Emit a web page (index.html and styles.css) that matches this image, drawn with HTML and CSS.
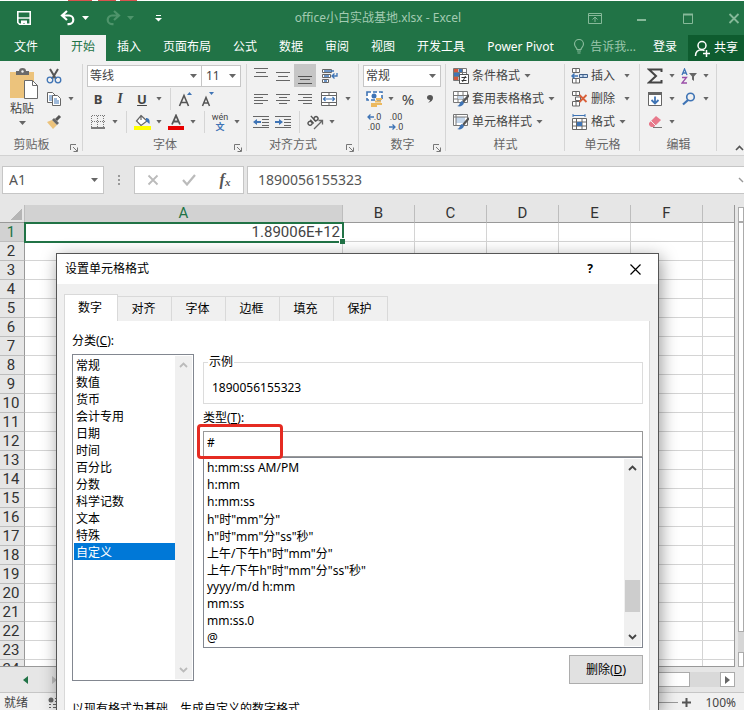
FILE: index.html
```html
<!DOCTYPE html>
<html lang="zh-CN">
<head>
  <meta charset="UTF-8">
  <meta name="viewport" content="width=device-width, initial-scale=1.0">
  <title>office小白实战基地.xlsx - Excel</title>
  <link rel="stylesheet" href="styles.css">
</head>
<body>
  <div class="top-strip"></div>

  <header class="titlebar">
    <div class="quick">
      <button class="quick-btn" aria-label="保存"><svg width="16" height="16"><path d="M1.8 1.8h12.4v12.4H3.5L1.8 12.5z" fill="none" stroke="#fff" stroke-width="1.6"/><path d="M2 8h12" stroke="#fff" stroke-width="1.4"/><path d="M5 10.5h6V15H9v-2H7v2H5z" fill="#fff"/></svg></button>
      <button class="quick-btn undo" aria-label="撤消"><svg width="16" height="16"><path d="M7 1L2 5.5L7 10M2.5 5.5H9a4.3 4.3 0 0 1 0 8.6H7.5" fill="none" stroke="#fff" stroke-width="2.2"/></svg></button>
      <i class="arrow light"></i>
      <button class="quick-btn redo" aria-label="恢复"><svg width="16" height="16"><path d="M9 1l5 4.5L9 10M13.5 5.5H7a4.3 4.3 0 0 0 0 8.6h1.5" fill="none" stroke="#4e946b" stroke-width="2.2"/></svg></button>
      <i class="arrow faint"></i>
      <button class="quick-btn custom" aria-label="自定义"><svg width="7" height="8"><path d="M1 1.5h5" stroke="#fff"/><path d="M0 4h7L3.5 7.5z" fill="#fff"/></svg></button>
    </div>
    <div class="doc-title">office小白实战基地.xlsx - Excel</div>
    <div class="window-btns">
      <button aria-label="功能区"><svg width="14" height="11"><path d="M.5.5h13v10H.5zM.5 2.5h13M7 9V4.5M4.5 6.5L7 4l2.500 2.5" fill="none" stroke="#86b999"/></svg></button>
      <button aria-label="最小化"><svg width="12" height="11"><path d="M1 7h9" stroke="#86b999" stroke-width="2"/></svg></button>
      <button aria-label="最大化"><svg width="12" height="11"><path d="M1.5 1.5h9v9h-9z" fill="none" stroke="#86b999"/><path d="M1 1.5h10" stroke="#86b999" stroke-width="2"/></svg></button>
      <button aria-label="关闭"><svg width="12" height="11"><path d="M1.5 1l9 9M10.5 1l-9 9" stroke="#86b999" stroke-width="1.8"/></svg></button>
    </div>
  </header>

  <nav class="tabs">
    <a href="#" class="file">文件</a>
    <a href="#" class="active">开始</a>
    <a href="#">插入</a>
    <a href="#">页面布局</a>
    <a href="#">公式</a>
    <a href="#">数据</a>
    <a href="#">审阅</a>
    <a href="#">视图</a>
    <a href="#">开发工具</a>
    <a href="#">Power Pivot</a>
    <a href="#" class="tell"><svg width="12" height="15"><path d="M4 10.5C4 8.5 1.5 8 1.5 5a4.5 4.5 0 0 1 9 0c0 3-2.5 3.5-2.5 5.5zM4 12h4M4.5 14h3" fill="none" stroke="#86b999" stroke-width="1.2"/></svg>告诉我...</a>
    <a href="#">登录</a>
    <button class="share"><svg width="17" height="17"><circle cx="8" cy="5.5" r="4" fill="none" stroke="#fff" stroke-width="1.5"/><path d="M1.5 16C1.5 12 4 9.8 8 9.8M8 9.8l2.5.8M9 13.5h7M12.5 10v7" fill="none" stroke="#fff" stroke-width="1.5"/></svg>共享</button>
  </nav>

  <section class="ribbon">
    <div class="group clipboard">
      <div class="group-body split">
        <button class="paste">
          <svg width="28" height="32"><path d="M0 4h24v26H0z" fill="#ecc37c"/><path d="M6 6V3h3a3.5 3 0 0 1 7 0h3v4H6z" fill="#6a6a6a"/><circle cx="12.5" cy="3.5" r="1.2" fill="#f1f1f1"/><path d="M14.5 12.5h8l5 5v13h-13z" fill="#fff" stroke="#6a6a6a"/><path d="M22.5 12.5v5h5" fill="none" stroke="#6a6a6a"/></svg>
          <span>粘贴</span>
          <i class="arrow"></i>
        </button>
        <div>
          <div class="row"><button class="tool" aria-label="剪切"><svg width="16" height="16"><path d="M4 1l6 10M12 1L6 11" stroke="#555" stroke-width="2"/><circle cx="4" cy="12" r="2.8" fill="none" stroke="#3f74b5" stroke-width="1.3"/><circle cx="12" cy="12" r="2.8" fill="none" stroke="#3f74b5" stroke-width="1.3"/></svg></button></div>
          <div class="row"><button class="tool" aria-label="复制"><svg width="16" height="16"><path d="M1.5 1.5h5l3 3v7h-8z" fill="#fff" stroke="#666"/><path d="M3 5h4M3 7h3M3 9h3" stroke="#3f74b5"/><path d="M6.5 4.5h5l3 3v7h-8z" fill="#fff" stroke="#666"/><path d="M8 8h3M8 10h5M8 12h5" stroke="#3f74b5"/></svg></button><i class="drop"></i></div>
          <div class="row"><button class="tool" aria-label="格式刷"><svg width="16" height="16"><path d="M1 8l5-2 5 5-4 4z" fill="#ecc37c"/><path d="M6 6l2-2 5 5-2 2z" fill="#666"/><path d="M10 6l4-4" stroke="#555" stroke-width="3"/></svg></button></div>
        </div>
      </div>
      <div class="group-label">剪贴板<svg width="8" height="8"><use href="#launch"/></svg></div>
    </div>

    <div class="group font">
      <div class="group-body">
        <div class="row combos">
          <select class="font-name" aria-label="字体"><option>等线</option></select>
          <select class="font-size" aria-label="字号"><option>11</option></select>
        </div>
        <div class="row">
          <button class="tool"><b>B</b></button>
          <button class="tool italic"><b>I</b></button>
          <button class="tool"><b><u>U</u></b></button>
          <i class="drop"></i><i class="sep"></i>
          <button class="tool" aria-label="增大字号"><svg width="16" height="16"><path d="M1.5 15L6 4.5L10.5 15M3 11.5h6" fill="none" stroke="#555" stroke-width="1.6"/><path d="M9 4l2.5-3L14 4z" fill="#3f74b5"/></svg></button>
          <button class="tool" aria-label="减小字号"><svg width="16" height="16"><path d="M2.5 15L6 6.5L9.5 15M3.500 12h5" fill="none" stroke="#555" stroke-width="1.5"/><path d="M9 1l2.5 3L14 1z" fill="#3f74b5"/></svg></button>
        </div>
        <div class="row">
          <button class="tool" aria-label="边框"><svg width="14" height="14"><path d="M1 .5h13M1 6.5h13M.5 1v12M6.5 1v12M12.5 1v12" stroke="#777" stroke-dasharray="1 1"/><path d="M0 13h14" stroke="#555" stroke-width="1.5"/></svg></button>
          <i class="drop"></i><i class="sep"></i>
          <button class="tool" aria-label="填充颜色"><svg width="17" height="16"><path d="M7 1.5l6 5.5-6 4.5L2.500 7zM7 6V1" fill="#fff" stroke="#666" stroke-width="1.2"/><path d="M12 4c3 0 4 2 3.5 6L12 7z" fill="#3f74b5"/><path d="M0 12h17v4H0z" fill="#ffff00"/></svg></button>
          <i class="drop"></i>
          <button class="tool" aria-label="字体颜色"><svg width="16" height="16"><path d="M4 10.5L8 1.5l4 9M5 7.5h6" fill="none" stroke="#555" stroke-width="1.8"/><path d="M0 12h16v4H0z" fill="#e80000"/></svg></button>
          <i class="drop"></i><i class="sep"></i>
          <button class="tool phonetic"><span>wén</span><span class="wen">文</span></button>
          <i class="drop"></i>
        </div>
      </div>
      <div class="group-label">字体<svg width="8" height="8"><use href="#launch"/></svg></div>
    </div>

    <div class="group align">
      <div class="group-body">
        <div class="row">
          <button class="tool" aria-label="顶端对齐"><svg width="14" height="16"><path d="M0 .5h14M2 4.5h10M0 8.5h14" stroke="#666"/></svg></button>
          <button class="tool" aria-label="垂直居中"><svg width="14" height="16"><path d="M0 4.5h14M2 8.5h10M0 12.5h14" stroke="#666"/></svg></button>
          <button class="tool pressed" aria-label="底端对齐"><svg width="14" height="16"><path d="M0 8.5h14M2 11.5h10M0 15.5h14" stroke="#555"/></svg></button>
          <button class="tool wrap" aria-label="自动换行"><svg width="17" height="16"><path d="M1.5 1.5h9v3h-9zM1.5 6.5h8v3h-8zM1.5 11.5h6v3h-6z" fill="#fff" stroke="#666"/><path d="M3 3h10M3 8h5M3 13h3M16 5v3h-5M13.5 5.5L11 8l2.500 2.5" fill="none" stroke="#3f74b5" stroke-width="1.3"/></svg></button>
        </div>
        <div class="row">
          <button class="tool" aria-label="左对齐"><svg width="14" height="12"><path d="M0 1.5h14M0 4.5h9M0 7.5h14M0 10.5h9" stroke="#666"/></svg></button>
          <button class="tool" aria-label="居中"><svg width="14" height="12"><path d="M0 1.5h14M3 4.5h8M0 7.5h14M3 10.5h8" stroke="#666"/></svg></button>
          <button class="tool" aria-label="右对齐"><svg width="14" height="12"><path d="M0 1.5h14M5 4.5h9M0 7.5h14M5 10.5h9" stroke="#666"/></svg></button>
          <button class="tool wrap" aria-label="合并后居中"><svg width="16" height="16"><path d="M.5 1.5h15v13H.5zM.5 4.5h15M.5 11.5h15M8 1.5v3M8 11.5v3" fill="#fff" stroke="#666"/><path d="M2 8h12M4.5 6L2.5 8l2 2M11.5 6l2 2-2 2" fill="none" stroke="#3f74b5" stroke-width="1.2"/></svg></button>
          <i class="drop"></i>
        </div>
        <div class="row">
          <button class="tool" aria-label="减少缩进量"><svg width="16" height="14"><path d="M0 1.5h16M9 4.5h7M9 7.5h7M9 10.5h7M0 12.5h16" stroke="#666"/><path d="M0 7l4-3v2h4v2H4v2z" fill="#3f74b5"/></svg></button>
          <button class="tool" aria-label="增加缩进量"><svg width="16" height="14"><path d="M0 1.5h16M9 4.5h7M9 7.5h7M9 10.5h7M0 12.5h16" stroke="#666"/><path d="M8 7L4 4v2H0v2h4v2z" fill="#3f74b5"/></svg></button>
          <i class="sep"></i>
          <button class="tool" aria-label="方向"><svg width="17" height="16"><g transform="rotate(-42 6 8)" fill="none" stroke="#555" stroke-width="1.4"><circle cx="3" cy="7" r="2"/><path d="M5.5 4.5v5M8.5 2v7.5"/><circle cx="10.5" cy="7.5" r="2"/></g><path d="M7 15l8-8M11.5 6.5h4v4" fill="none" stroke="#666" stroke-width="1.3"/></svg></button>
          <i class="drop"></i>
        </div>
      </div>
      <div class="group-label">对齐方式<svg width="8" height="8"><use href="#launch"/></svg></div>
    </div>

    <div class="group number">
      <div class="group-body">
        <div class="row combos">
          <select class="format" aria-label="数字格式"><option>常规</option></select>
        </div>
        <div class="row">
          <button class="tool" aria-label="会计数字格式"><svg width="17" height="16"><path d="M1 1h15v8H1z" fill="#fff" stroke="#3f74b5" stroke-width="1.6" stroke-dasharray="4 2"/><circle cx="8" cy="5" r="2.5" fill="#3f74b5"/><path d="M10 8h6M9 10.5h6M5 13h6M5 15h6M11 13h5" stroke="#ecb95f" stroke-width="1.8"/></svg></button>
          <i class="drop"></i>
          <button class="tool percent">%</button>
          <button class="tool" aria-label="千位分隔样式"><svg width="6" height="8"><path d="M3 0c2 0 3 1 3 3S4 7 1 8c1-1 2-2 2-3C1 5 0 4 0 2.5 0 1 1 0 3 0z" fill="#555"/></svg></button>
        </div>
        <div class="row">
          <button class="tool decimals"><span><svg width="7" height="6"><path d="M7 3H1M3.5.5L1 3l2.5 2.5" fill="none" stroke="#3f74b5" stroke-width="1.3"/></svg>.0</span><span>.00</span></button>
          <button class="tool decimals"><span>.00</span><span><svg width="7" height="6"><path d="M0 3h6M3.5.5L6 3L3.5 5.5" fill="none" stroke="#3f74b5" stroke-width="1.3"/></svg>.0</span></button>
        </div>
      </div>
      <div class="group-label">数字<svg width="8" height="8"><use href="#launch"/></svg></div>
    </div>

    <div class="group styles">
      <div class="group-body">
        <div class="row"><button class="text-tool"><svg width="16" height="16"><path d="M.5.5h13v12H.5zM.5 4.5h13M.5 8.5h13M5 .5v12M9.5.5v12" fill="#fff" stroke="#777"/><path d="M1 1h4v3H1zM1 9h4v3H1z" fill="#d2553c"/><path d="M6 1h3v3H6zM1 5h6v3H1z" fill="#3f74b5"/><path d="M6.5 6.5h9v9h-9z" fill="#fff" stroke="#555"/><path d="M8.5 9.5h5M8.5 12.5h5M12.5 8l-3 6" stroke="#333"/></svg>条件格式<i class="arrow"></i></button></div>
        <div class="row"><button class="text-tool"><svg width="16" height="16"><use href="#grid-brush"/></svg>套用表格格式<i class="arrow"></i></button></div>
        <div class="row"><button class="text-tool"><svg width="16" height="16"><use href="#cell-brush"/></svg>单元格样式<i class="arrow"></i></button></div>
      </div>
      <div class="group-label">样式</div>
    </div>

    <div class="group cells">
      <div class="group-body">
        <div class="row"><button class="text-tool"><svg width="17" height="16"><path d="M1.5.5h7v4h-7zM5 .5v4M1.5 10.5h7v4.500h-7zM5 10.5V15" fill="#fff" stroke="#666"/><path d="M8.5 6.5h8v3h-8zM12 6.5v3" fill="#c9dbef" stroke="#3f5f8a"/><path d="M7 8H1M3.5 5.5L1 8l2.5 2.5" fill="none" stroke="#3f74b5" stroke-width="1.5"/></svg>插入</button><i class="drop wide"></i></div>
        <div class="row"><button class="text-tool"><svg width="17" height="16"><path d="M1.5.5h7v4h-7zM5 .5v4M1.5 10.5h7v4.500h-7zM5 10.5V15M4.5 6h5v3.5h-5z" fill="#fff" stroke="#666"/><path d="M8.5 4l7 7M15.5 4l-7 7" stroke="#d9603a" stroke-width="1.8"/></svg>删除</button><i class="drop wide"></i></div>
        <div class="row"><button class="text-tool"><svg width="17" height="16"><path d="M1.5 4.5h14v11h-14zM1.5 8h14M1.5 12h14M5.5 4.5v11M11 4.5v11" fill="#fff" stroke="#666"/><path d="M6 8h5v4H6z" fill="#3f74b5"/><path d="M2 1.5h12M2 0v3M14 0v3" stroke="#3f74b5"/></svg>格式<i class="arrow"></i></button></div>
      </div>
      <div class="group-label">单元格</div>
    </div>

    <div class="group edit">
      <div class="group-body">
        <div class="row">
          <button class="tool" aria-label="自动求和"><svg width="16" height="16"><path d="M14.5 4V1.5H2L9 8l-7 6.5h12.500V12" fill="none" stroke="#444" stroke-width="2"/></svg></button>
          <i class="drop"></i>
          <button class="tool" aria-label="排序和筛选"><svg width="16" height="16"><path d="M1 7l2.5-6L6 7M2 5h3" fill="none" stroke="#3f74b5" stroke-width="1.3"/><path d="M1 9.5h4.500L1 15h5" fill="none" stroke="#9a4fa8" stroke-width="1.3"/><path d="M8 5h8l-3 3.5V13l-2-1.5v-3z" fill="#666"/></svg></button>
          <i class="drop"></i>
        </div>
        <div class="row">
          <button class="tool" aria-label="填充"><svg width="14" height="16"><path d="M.5 1.5h13v13H.5z" fill="#fff" stroke="#666"/><path d="M0 1h14v3H0z" fill="#666"/><path d="M7 5.5v7M3.5 9L7 12.5 10.5 9" fill="none" stroke="#3f74b5" stroke-width="1.8"/></svg></button>
          <i class="drop"></i>
          <button class="tool" aria-label="查找和选择"><svg width="14" height="14"><circle cx="8.5" cy="5" r="3.8" fill="none" stroke="#3f74b5" stroke-width="1.6"/><path d="M6 8l-5 4.5" stroke="#3f74b5" stroke-width="2.2"/></svg></button>
          <i class="drop"></i>
        </div>
        <div class="row">
          <button class="tool" aria-label="清除"><svg width="15" height="14"><path d="M1 8l7-7 5 4-7 7H3L1 10z" fill="#e8798b"/><path d="M3 6l5 5" stroke="#f1f1f1"/><path d="M5 12.5h9" stroke="#777"/></svg></button>
          <i class="drop"></i>
        </div>
      </div>
      <div class="group-label">编辑</div>
    </div>
    <button class="collapse" aria-label="折叠功能区"><svg width="9" height="6"><path d="M1 5l3.5-3.5L8 5" fill="none" stroke="#555" stroke-width="1.6"/></svg></button>
  </section>

  <section class="formula-bar">
    <div class="name-box"><input type="text" value="A1" aria-label="名称框"><i class="arrow"></i></div>
    <span class="grip"></span>
    <div class="formula-btns">
      <button aria-label="取消"><svg width="12" height="12"><path d="M1.5 1.5l9 9M10.5 1.5l-9 9" stroke="#bbb" stroke-width="1.8"/></svg></button>
      <button aria-label="输入"><svg width="14" height="12"><path d="M1 6l4 4.5L13 1" fill="none" stroke="#bbb" stroke-width="2.2"/></svg></button>
      <button class="fx">f<small>x</small></button>
    </div>
    <div class="formula-box"><input type="text" value="1890056155323" aria-label="编辑栏"><svg width="6" height="6"><path d="M1 1l4 4" stroke="#999" stroke-width="1.5"/></svg></div>
  </section>

  <main class="workbook">
    <div class="sheet">
      <table>
        <thead>
          <tr><th class="corner"></th><th class="col-a on">A</th><th>B</th><th>C</th><th>D</th><th>E</th><th>F</th><th></th></tr>
        </thead>
        <tbody id="rows">
          <tr><th class="on">1</th><td class="selected">1.89006E+12</td><td></td><td></td><td></td><td></td><td></td><td></td></tr>
        </tbody>
      </table>
    </div>
    <div class="v-scroll"><span class="v-btn"></span><span class="v-thumb"></span><span class="v-track"></span><span class="v-btn"></span></div>
  </main>

  <div class="sheet-bar">
    <button aria-label="上一个"><svg width="5" height="8"><path d="M5 0v8L0 4z" fill="#217346"/></svg></button>
    <button aria-label="下一个"><svg width="5" height="8"><path d="M0 0v8l5-4z" fill="#bbb"/></svg></button>
    <div class="h-scroll"><span class="h-thumb"></span><button aria-label="向右滚动"><svg width="5" height="8"><path d="M0 0v8l5-4z" fill="#666"/></svg></button></div>
  </div>
  <footer class="status">
    <span>就绪</span>
    <svg width="14" height="12"><circle cx="3" cy="3" r="2.5" fill="#666"/><path d="M7 1.5h6M7 4.5h6M1 7.5h2M5 7.5h8M1 10.5h2M5 10.5h8" stroke="#666"/></svg>
    <div class="zoom"><span class="zoom-line"></span><svg width="9" height="9"><path d="M0 4.5h9M4.5 0v9" stroke="#555" stroke-width="2"/></svg><span>100%</span></div>
  </footer>

  <div class="dialog" role="dialog" aria-labelledby="dialogTitle">
    <div class="dialog-title">
      <span id="dialogTitle">设置单元格格式</span>
      <button>?</button>
      <button aria-label="关闭"><svg width="11" height="11"><path d="M.5.5l10 10M10.5.5l-10 10" stroke="#000" stroke-width="1.2"/></svg></button>
    </div>
    <div class="dialog-tabs">
      <button class="active">数字</button><button>对齐</button><button>字体</button><button>边框</button><button>填充</button><button>保护</button>
    </div>
    <div class="panel">
      <div class="columns">
        <div class="category">
          <label for="category">分类(<u>C</u>):</label>
          <div class="listbox">
            <select id="category" size="19">
              <option>常规</option>
              <option>数值</option>
              <option>货币</option>
              <option>会计专用</option>
              <option>日期</option>
              <option>时间</option>
              <option>百分比</option>
              <option>分数</option>
              <option>科学记数</option>
              <option>文本</option>
              <option>特殊</option>
              <option selected>自定义</option>
            </select>
            <div class="bar off"><svg width="9" height="6"><use href="#up"/></svg><svg width="9" height="6"><use href="#down"/></svg></div>
          </div>
        </div>
        <div class="detail">
          <fieldset>
            <legend>示例</legend>
            <output>1890056155323</output>
          </fieldset>
          <label for="type">类型(<u>T</u>):</label>
          <div class="type-box">
            <input type="text" id="type" value="#">
            <span class="mark"></span>
          </div>
          <div class="listbox codes">
            <select size="11" aria-label="格式代码">
              <option>h:mm:ss AM/PM</option>
              <option>h:mm</option>
              <option>h:mm:ss</option>
              <option>h"时"mm"分"</option>
              <option>h"时"mm"分"ss"秒"</option>
              <option>上午/下午h"时"mm"分"</option>
              <option>上午/下午h"时"mm"分"ss"秒"</option>
              <option>yyyy/m/d h:mm</option>
              <option>mm:ss</option>
              <option>mm:ss.0</option>
              <option>@</option>
            </select>
            <div class="bar"><svg width="9" height="6"><use href="#up"/></svg><span class="thumb"></span><svg width="9" height="6"><use href="#down"/></svg></div>
          </div>
          <button class="delete">删除(<u>D</u>)</button>
        </div>
      </div>
      <p>以现有格式为基础，生成自定义的数字格式。</p>
    </div>
  </div>

  <svg class="defs" width="0" height="0">
    <defs>
      <g id="launch"><path d="M.5 6V.5H6M3 3l4 4M7.5 3.5v4h-4" fill="none" stroke="#777"/></g>
      <g id="grid-brush"><path d="M.5.5h14v11H.5zM.5 4.5h14M.5 8h14M5 .5v11M10 .5v11" fill="#fff" stroke="#777"/><path d="M5 5h5v3H5z" fill="#c4d6ea"/><path d="M16 4l-6 7" stroke="#555" stroke-width="2.2"/><path d="M4 15c3 0 2-4 5-5l2 2c-1 3-4 4-7 3z" fill="#3f74b5"/></g>
      <g id="cell-brush"><path d="M.5.5h14v11H.5z" fill="#fff" stroke="#777"/><path d="M3 3h9v6H3z" fill="#c4d6ea"/><path d="M.5 3h14M3 .5v11" stroke="#777"/><path d="M16 4l-6 7" stroke="#555" stroke-width="2.2"/><path d="M4 15c3 0 2-4 5-5l2 2c-1 3-4 4-7 3z" fill="#3f74b5"/></g>
      <g id="up"><path d="M1 5l3.5-3.5L8 5" fill="none" stroke="currentColor" stroke-width="1.8"/></g>
      <g id="down"><path d="M1 1l3.5 3.5L8 1" fill="none" stroke="currentColor" stroke-width="1.8"/></g>
    </defs>
  </svg>

  <script>
    const rows = document.getElementById('rows');
    for (let i = 2; i <= 24; i++) {
      const tr = document.createElement('tr');
      tr.innerHTML = `<th>${i}</th>` + '<td></td>'.repeat(7);
      rows.appendChild(tr);
    }
  </script>
</body>
</html>
```
FILE: styles.css
```css
* {
  box-sizing: border-box;
}

body {
  margin: 0;
  height: 100vh;
  display: flex;
  flex-direction: column;
  overflow: hidden;
  position: relative;
  background: #e6e6e6;
  color: #444;
  font: 12px/16px "Noto Sans", "Noto Sans CJK SC", sans-serif;
}

button, input, select {
  font: inherit;
  color: inherit;
  border: none;
  background: none;
  padding: 0;
  margin: 0;
  border-radius: 0;
  outline: none;
}

svg {
  display: block;
  flex: none;
}

a {
  color: inherit;
  text-decoration: none;
}

.defs {
  position: absolute;
}

.top-strip {
  flex: none;
  height: 1px;
  background: linear-gradient(to right, #fff 68px, #d9534f 68px, #d9534f 92px, #fff 92px, #fff 98px, #d9534f 98px, #d9534f 116px, #fff 116px, #fff 120px, #d9534f 120px, #d9534f 137px, #fff 137px);
}

/* title bar */
.titlebar {
  flex: none;
  height: 34px;
  display: flex;
  align-items: center;
  background: #217346;
}

.quick {
  flex: 1;
  display: flex;
  align-items: center;
  padding-left: 16px;
}

.undo {
  margin-left: 28px;
}

.redo {
  margin-left: 16px;
}

.quick .arrow {
  margin-left: 6px;
}

.custom {
  margin-left: 21px;
}

.doc-title {
  color: #a3cbb2;
}

.window-btns {
  flex: 1;
  display: flex;
  justify-content: flex-end;
  gap: 34px;
  padding-right: 4px;
}

.arrow {
  display: block;
  flex: none;
  width: 7px;
  height: 4px;
  background: #666;
  clip-path: polygon(0 0, 100% 0, 50% 100%);
}

.arrow.light {
  background: #fff;
}

.arrow.faint {
  background: #4e946b;
}

/* ribbon tabs */
.tabs {
  flex: none;
  height: 26px;
  display: flex;
  align-items: stretch;
  background: #217346;
  color: #fff;
  white-space: nowrap;
}

.tabs a {
  padding: 4px 11px 0;
}

.tabs .file {
  width: 60px;
  padding-left: 14px;
}

.tabs .active {
  background: #f1f1f1;
  color: #217346;
}

.tabs .tell {
  display: flex;
  align-items: flex-start;
  gap: 5px;
  margin-left: auto;
  padding: 4px 6px 0 0;
  color: #9cc7ac;
}

.share {
  display: flex;
  align-items: center;
  gap: 3px;
  padding: 0 6px;
  background: #0e5c2f;
}

/* ribbon */
.ribbon {
  flex: none;
  height: 95px;
  display: flex;
  background: #f1f1f1;
  border-bottom: 1px solid #d2d2d2;
}

.group {
  position: relative;
  display: flex;
  flex-direction: column;
  padding: 3px 4px 0;
}

.group::after {
  content: "";
  position: absolute;
  right: 0;
  top: 3px;
  bottom: 4px;
  width: 1px;
  background: #d5d5d5;
}

.clipboard {
  width: 83px;
}

.font {
  width: 164px;
}

.align {
  width: 112px;
  padding: 3px 3px 0;
}

.number {
  width: 87px;
}

.styles {
  width: 119px;
}

.cells {
  width: 75px;
}

.edit {
  width: 77px;
}

.group-body {
  height: 69px;
}

.split {
  display: flex;
}

.group-label {
  display: flex;
  justify-content: center;
  padding-top: 4px;
  color: #666;
}

.clipboard .group-label, .align .group-label {
  padding-right: 20px;
}

.group-label svg {
  position: absolute;
  right: 5px;
  bottom: 3px;
}

.row {
  display: flex;
  align-items: center;
  height: 23px;
}

.paste {
  width: 39px;
  padding: 4px 0 0 6px;
  display: flex;
  flex-direction: column;
  align-items: flex-start;
}

.paste span {
  padding-top: 1px;
}

.paste .arrow {
  margin: 4px 0 0 9px;
}

.tool {
  flex: none;
  width: 22px;
  height: 23px;
  display: flex;
  align-items: center;
  justify-content: center;
  font-size: 13px;
}

.wrap {
  width: 26px;
}

.italic {
  font-family: "Liberation Serif", serif;
  font-style: italic;
  font-size: 14px;
}

.percent {
  font-size: 15px;
}

.pressed {
  background: #c6c6c6;
}

.drop {
  flex: none;
  width: 12px;
  height: 4px;
  background: #666;
  clip-path: polygon(3px 0, 9px 0, 6px 4px);
}

.drop.wide {
  margin-left: 6px;
}

.sep {
  flex: none;
  width: 10px;
  height: 22px;
  background: linear-gradient(to right, transparent 5px, #d5d5d5 5px, #d5d5d5 6px, transparent 6px);
}

.phonetic, .decimals {
  flex-direction: column;
  font: 9px/10px Roboto, "Noto Sans CJK SC", sans-serif;
}

.wen {
  color: #3f74b5;
  font-weight: bold;
}

.decimals span {
  display: flex;
  align-items: center;
}

.combos select {
  height: 22px;
  padding: 0 4px;
  border: 1px solid #c6c6c6;
  appearance: none;
  background: #fff url("data:image/svg+xml,%3Csvg xmlns='http://www.w3.org/2000/svg' width='7' height='4'%3E%3Cpath d='M0 0h7L3.5 4z' fill='%23666'/%3E%3C/svg%3E") no-repeat right 4px center;
}

.combos .font-name {
  width: 115px;
  padding-left: 2px;
}

.combos .font-size {
  width: 40px;
  margin-left: -1px;
}

.combos .format {
  width: 78px;
  padding-left: 2px;
}

.text-tool {
  display: flex;
  align-items: center;
  gap: 3px;
  white-space: nowrap;
}

.styles .text-tool {
  padding-left: 3px;
}

.cells .text-tool {
  padding-left: 2px;
}

.text-tool .arrow {
  margin-left: 1px;
}

.collapse {
  margin-left: auto;
  align-self: flex-end;
  padding-bottom: 4px;
  width: 9px;
}

/* formula bar */
.formula-bar {
  flex: none;
  height: 49px;
  display: flex;
  padding: 10px 0 11px 2px;
  font-size: 14px;
  color: #555;
}

.name-box, .formula-btns, .formula-box {
  display: flex;
  align-items: center;
  background: #fff;
  border: 1px solid #c6c6c6;
}

.name-box {
  width: 102px;
  padding: 0 5px 0 6px;
}

.name-box input {
  width: 100%;
}

.grip {
  width: 30px;
  background: radial-gradient(circle, #999 1px, transparent 1px) center / 30px 4px content-box;
  padding: 8px 0;
}

.formula-btns {
  width: 110px;
  margin-right: 3px;
}

.formula-btns button {
  flex: 1;
  display: flex;
  justify-content: center;
}

.fx {
  font: italic bold 16px "Liberation Serif", serif;
}

.fx small {
  font-size: 11px;
  padding-top: 5px;
}

.formula-box {
  flex: 1;
  padding-left: 10px;
  border-right: none;
}

.formula-box input {
  flex: 1;
}

/* grid */
.workbook {
  flex: 1;
  min-height: 0;
  display: flex;
  gap: 3px;
}

.sheet {
  flex: 1;
  min-width: 0;
  overflow: hidden;
  background: #fff;
  border-right: 1px solid #999;
  border-bottom: 1px solid #999;
}

.sheet table {
  table-layout: fixed;
  width: 775px;
  border-collapse: separate;
  border-spacing: 0;
  font: 15px/18px Roboto, sans-serif;
}

.sheet th, .sheet td {
  height: 19px;
  padding: 0;
  border-right: 1px solid #d4d4d4;
  border-bottom: 1px solid #d4d4d4;
}

.sheet th {
  background: #e6e6e6;
  font-weight: normal;
  color: #333;
}

.sheet thead th {
  height: 18px;
  line-height: 17px;
  border-color: #bdbdbd;
  border-bottom-color: #999;
}

.sheet tbody th {
  padding-right: 2px;
  border-color: #bdbdbd;
  border-right-color: #999;
}

.sheet .corner {
  width: 25px;
  background: linear-gradient(135deg, transparent 50%, #b5b5b5 50%) no-repeat 11px 4px / 11px 11px #e6e6e6;
}

.sheet .col-a {
  width: 318px;
}

.sheet th.on {
  background: #d2d2d2;
  color: #217346;
}

.sheet .selected {
  position: relative;
  text-align: right;
  padding-right: 2px;
  outline: 2px solid #217346;
  outline-offset: -1px;
}

.selected::after {
  content: "";
  position: absolute;
  right: -3px;
  bottom: -3px;
  width: 5px;
  height: 5px;
  background: #217346;
  border: solid #fff;
  border-width: 1px 0 0 1px;
}

.v-scroll {
  width: 6px;
  display: flex;
  flex-direction: column;
  padding-top: 2px;
}

.v-btn, .v-thumb {
  background: #fff;
  border: 1px solid #ababab;
}

.v-btn {
  height: 15px;
}

.v-thumb {
  flex: 1;
}

.v-track {
  height: 20px;
  background: #d6d6d6;
}

.sheet-bar {
  flex: none;
  height: 26px;
  display: flex;
  align-items: center;
  gap: 24px;
  padding: 0 9px 0 23px;
  border-bottom: 1px solid #c6c6c6;
}

.h-scroll {
  flex: 1;
  display: flex;
  justify-content: flex-end;
  height: 15px;
  background: linear-gradient(to right, transparent 50%, #d9d9d9 50%);
}

.h-thumb {
  width: 180px;
  margin-right: 30px;
  background: #fff;
  border: 1px solid #ababab;
}

.h-scroll button {
  width: 15px;
  display: flex;
  align-items: center;
  justify-content: center;
  background: #fff;
  border: 1px solid #ababab;
}

.status {
  flex: none;
  height: 17px;
  display: flex;
  align-items: center;
  gap: 20px;
  padding: 2px 8px 0 4px;
  background: #f1f1f1;
}

.zoom {
  display: flex;
  align-items: center;
  gap: 4px;
  margin-left: auto;
}

.zoom span:last-child {
  padding-left: 10px;
}

.zoom-line {
  width: 100px;
  height: 1px;
  background: #999;
}

/* format cells window, lies over the sheet */
.dialog {
  position: absolute;
  top: 253px;
  bottom: 0;
  left: 56px;
  right: 85px;
  display: flex;
  flex-direction: column;
  background: #f0f0f0;
  border: 1px solid #555;
  border-bottom: none;
  box-shadow: 2px 4px 16px rgba(0, 0, 0, 0.4);
  color: #000;
  overflow: hidden;
}

.dialog-title {
  flex: none;
  height: 30px;
  display: flex;
  align-items: center;
  padding: 0 6px 0 8px;
  background: #fff;
}

.dialog-title span {
  flex: 1;
}

.dialog-title button {
  width: 34px;
  margin-left: 11px;
  display: flex;
  justify-content: center;
  font-weight: bold;
}

.dialog-tabs {
  flex: none;
  display: flex;
  align-items: flex-end;
  padding: 10px 7px 0;
}

.dialog-tabs button {
  width: 54px;
  height: 25px;
  padding-right: 2px;
  border: 1px solid #d9d9d9;
  border-left: none;
  border-bottom: none;
}

.dialog-tabs .active {
  height: 27px;
  background: #fff;
  border-left: 1px solid #d9d9d9;
}

.panel {
  flex: 1;
  min-height: 0;
  margin: 0 8px 0 7px;
  padding: 12px 6px 0 7px;
  background: #fff;
  border: 1px solid #d9d9d9;
  border-top: none;
  border-bottom: none;
}

.columns {
  display: flex;
  gap: 9px;
}

.category {
  width: 122px;
}

.panel label {
  display: block;
}

.category label {
  padding-bottom: 5px;
}

.listbox {
  display: flex;
  height: 327px;
  padding: 1px;
  border: 1px solid #828790;
}

.listbox select {
  flex: 1;
  min-width: 0;
  height: 100%;
  overflow: hidden;
}

.listbox option {
  height: 17px;
  min-height: 17px;
  padding: 0 2px;
  line-height: 16px;
}

.listbox option:checked {
  background: #0078d7 linear-gradient(#0078d7, #0078d7);
  color: #fff;
}

.codes {
  height: 191px;
}

.bar {
  width: 17px;
  display: flex;
  flex-direction: column;
  align-items: center;
  justify-content: space-between;
  padding: 6px 0;
  background: #f0f0f0;
  color: #444;
}

.bar.off {
  color: #bbb;
}

.thumb {
  width: 15px;
  height: 32px;
  margin: auto 0 22px;
  background: #cdcdcd;
}

.detail {
  flex: 1;
  display: flex;
  flex-direction: column;
}

.detail fieldset {
  height: 50px;
  margin: 21px 0 6px;
  padding: 10px 8px;
  border: 1px solid #dcdcdc;
}

.detail legend {
  margin-left: -4px;
  padding: 0 1px;
}

.type-box {
  position: relative;
  margin-top: 5px;
}

.type-box input {
  width: 100%;
  height: 26px;
  padding: 0 3px 4px;
  border: 1px solid #999;
  display: block;
}

.mark {
  position: absolute;
  left: -6px;
  top: -7px;
  width: 86px;
  height: 35px;
  border: 3px solid #e52b22;
  border-radius: 4px;
}

.delete {
  align-self: flex-end;
  width: 74px;
  height: 29px;
  margin-top: 7px;
  background: #e1e1e1;
  border: 1px solid #adadad;
}

.panel p {
  margin: 17px 0 0;
}
```
